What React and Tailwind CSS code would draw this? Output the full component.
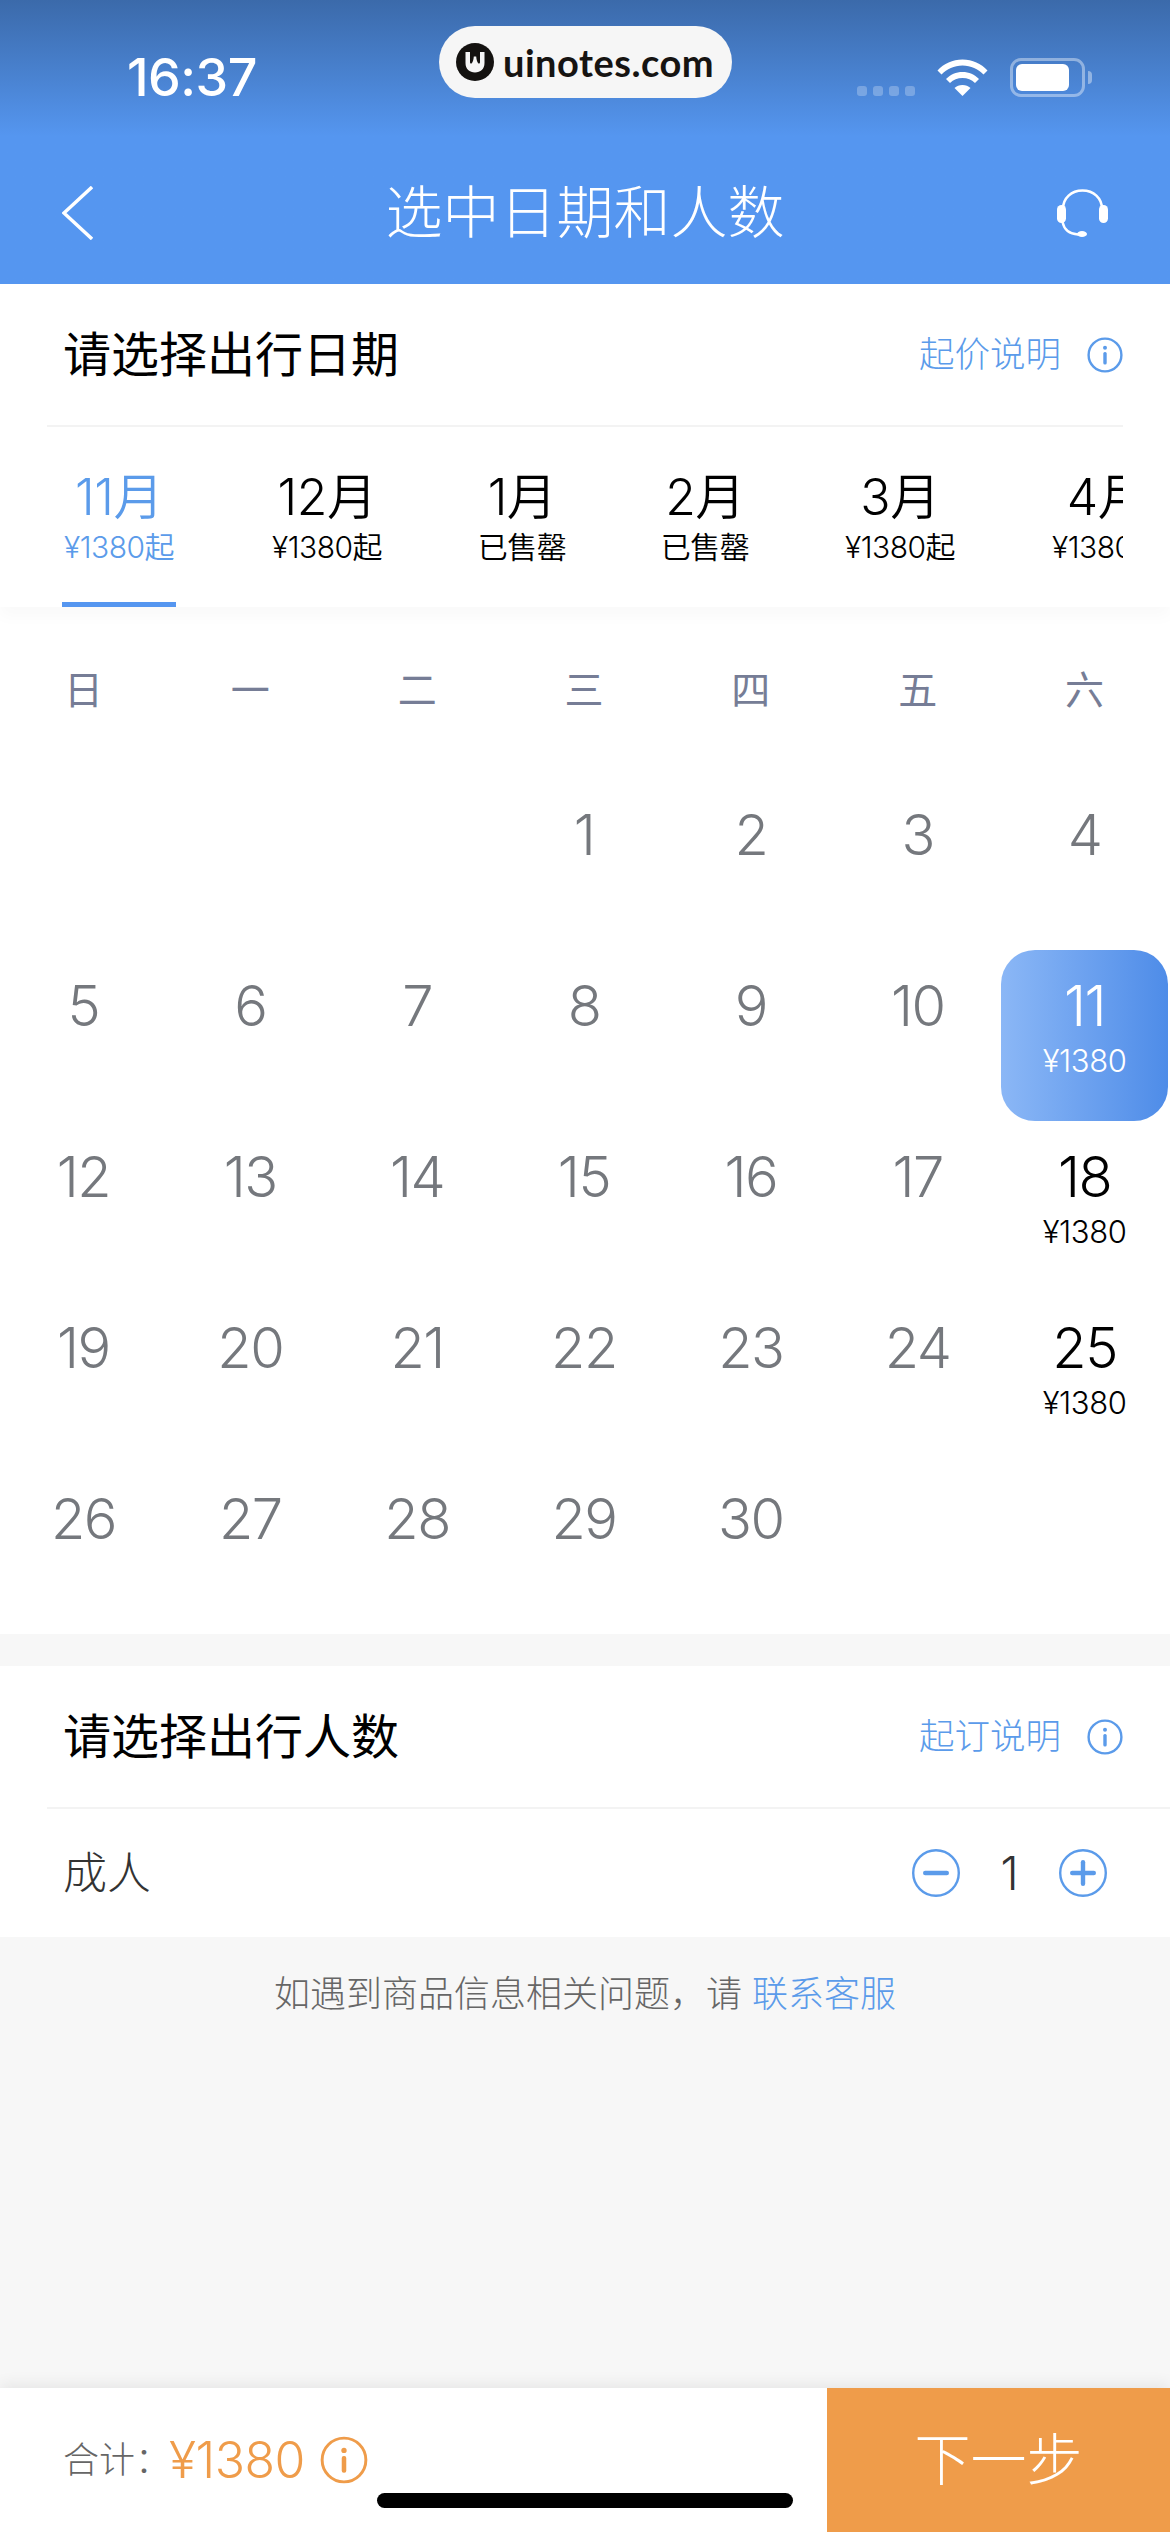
const FONT = "font-['Inter','Noto_Sans_CJK_SC',sans-serif]";

function InfoIcon({ className, color = "#5b9bea", sw = 2.4 }) {
  return (
    <svg viewBox="0 0 36 36" className={className} fill="none">
      <circle cx="18" cy="18" r="16.4" stroke={color} strokeWidth={sw} />
      <circle cx="18" cy="10.8" r="2" fill={color} />
      <rect x="16.3" y="15" width="3.4" height="12.5" rx="1.5" fill={color} />
    </svg>
  );
}

function Wifi() {
  return (
    <svg viewBox="0 0 51 37" className="w-[51px] h-[37px]" fill="#fff">
      <path d="M0.5 11.5C7 4.5 15.5 0.5 25.5 0.5S44 4.5 50.5 11.5L46.5 15.5C41 10 34 6.5 25.5 6.5S10 10 4.5 15.5Z" />
      <path d="M9 20C13.5 15.5 19 13 25.5 13S37.5 15.5 42 20L38 24C34.5 20.8 30.5 19 25.5 19S16.5 20.8 13 24Z" />
      <path d="M17.5 29C19.7 27 22.3 26 25.5 26S31.3 27 33.5 29L25.5 37Z" />
    </svg>
  );
}

function Headset() {
  return (
    <svg viewBox="0 0 51 48" className="w-[51px] h-[48px]" fill="none">
      <path d="M6 20C6 9 14.5 1.5 25.5 1.5S45 9 45 20" stroke="#fff" strokeWidth="2.6" />
      <rect x="0" y="16" width="9" height="18" rx="4.5" fill="#fff" />
      <rect x="42" y="16" width="9" height="18" rx="4.5" fill="#fff" />
      <path d="M5.5 33C7 40 12 45 21 45.5" stroke="#fff" strokeWidth="2.4" />
      <ellipse cx="25" cy="45" rx="5" ry="3" fill="#fff" />
    </svg>
  );
}

function Logo() {
  return (
    <svg viewBox="0 0 38 38" className="w-[38px] h-[38px] shrink-0">
      <circle cx="19" cy="19" r="19" fill="#141210" />
      <path d="M9.5 9H14V19C14 20.5 15 21 15.8 20.2C17 19 17.5 16.5 17.8 13.5H20.2C20.5 16.5 21 19 22.2 20.2C23 21 24 20.5 24 19V9H28.5V20C28.5 26 24.5 29.5 19 29.5S9.5 26 9.5 20Z" fill="#f6f6f6" />
    </svg>
  );
}

function SectionHeader({ title, link, full }) {
  return (
    <div className={`h-[143px] ml-[47px] pl-[16px] flex items-center justify-between border-b-2 border-[#f3f3f3] ${full ? "pr-[47px]" : "mr-[47px]"}`}>
      <span className="text-[48px] leading-[60px] text-black">{title}</span>
      <div className="flex items-center gap-[26px]">
        <span className="text-[35.5px] leading-[44px] text-[#5b9bea] font-light">{link}</span>
        <InfoIcon className="w-[36px] h-[36px]" />
      </div>
    </div>
  );
}

const tabs = [
  ["11月", "¥1380起", true, 114],
  ["12月", "¥1380起", false, 112],
  ["1月", "已售罄", false, 88],
  ["2月", "已售罄", false, 88],
  ["3月", "¥1380起", false, 112],
  ["4月", "¥1380起", false, 112],
];

const weekdays = ["日", "一", "二", "三", "四", "五", "六"];

const days = [
  null, null, null, 1, 2, 3, 4,
  5, 6, 7, 8, 9, 10, 11,
  12, 13, 14, 15, 16, 17, 18,
  19, 20, 21, 22, 23, 24, 25,
  26, 27, 28, 29, 30, null, null,
];

function DayCell({ d }) {
  if (d === null) return <div className="h-[171px]" />;
  const selected = d === 11;
  const priced = d === 11 || d === 18 || d === 25;
  return (
    <div className={`h-[171px] flex flex-col items-center pt-[28px] ${selected ? "rounded-[34px] bg-gradient-to-r from-[#8bb7f6] to-[#4e8ce8] text-white" : priced ? "text-black" : "text-[#75787d]"}`}>
      <span className="text-[56px] leading-[56px] font-[350] tracking-[-1.5px]">{d}</span>
      {priced && <span className="mt-[11px] text-[31px] leading-[32px] font-light tracking-[-0.4px]">¥1380</span>}
    </div>
  );
}

export default function App() {
  return (
    <div className={`${FONT} relative w-[1170px] h-[2532px] bg-[#f7f7f7] flex flex-col overflow-hidden`}>
      <header className="h-[284px] shrink-0 bg-gradient-to-b from-[#3b6aaa] via-[#5596f0] via-[48%] to-[#5596f0]">
        <div className="relative h-[142px] pt-[52px] pl-[127px] pr-[85px] flex justify-between items-start">
          <span className="text-[52px] leading-[52px] font-medium text-white tracking-[-0.5px]">16:37</span>
          <div className="flex items-start mt-[6px]">
            <div className="flex gap-[6px] mt-[28px] mr-[22px]">
              {[0, 1, 2, 3].map((i) => (
                <div key={i} className="w-[10px] h-[10px] rounded-[3px] bg-white/25" />
              ))}
            </div>
            <div className="mt-[1px] mr-[22px]"><Wifi /></div>
            <div className="relative w-[75px] h-[39px] rounded-[11px] border-[3px] border-white/40 p-[3px]">
              <div className="w-[53px] h-[27px] rounded-[6px] bg-white" />
              <div className="absolute -right-[10px] top-[10px] w-[4px] h-[13px] rounded-r-[4px] bg-white/40" />
            </div>
          </div>
          <div className="absolute left-[439px] top-[26px] w-[293px] h-[72px] rounded-[36px] bg-[#f6f6f6] flex items-center pl-[17px] gap-[9px]">
            <Logo />
            <span className="font-['Lato',sans-serif] text-[38px] leading-[44px] font-bold text-[#161412] tracking-[0.5px]">uinotes.com</span>
          </div>
        </div>
        <div className="h-[142px] pl-[62px] pr-[62px] grid grid-cols-[1fr_auto_1fr] items-center">
          <svg viewBox="0 0 31 54" className="w-[31px] h-[54px]" fill="none">
            <path d="M30 1L2 27L30 53" stroke="#fff" strokeWidth="3.4" />
          </svg>
          <span className="text-[57px] leading-[70px] text-white font-light">选中日期和人数</span>
          <div className="flex justify-end"><Headset /></div>
        </div>
      </header>

      <section className="bg-white shrink-0">
        <SectionHeader title="请选择出行日期" link="起价说明" />
        <div className="relative z-10 h-[180px] bg-white shadow-[0_10px_14px_rgba(0,0,0,0.025)]">
          <div className="h-[180px] ml-[47px] mr-[47px] pl-[15px] flex gap-[95px] overflow-hidden">
            {tabs.map(([m, s, active, w]) => (
              <div key={m} style={{ width: w }} className={`shrink-0 h-[180px] pt-[42px] flex flex-col items-center border-b-[5px] ${active ? "border-[#5596f0] text-[#5b9bea]" : "border-transparent text-black"}`}>
                <span className="text-[50px] leading-[56px] font-[350] tracking-[-0.5px]">{m}</span>
                <span className="mt-[3px] text-[30px] leading-[38px] font-[350] tracking-[-0.5px] whitespace-nowrap">{s}</span>
              </div>
            ))}
          </div>
        </div>
        <div className="w-[1168px] grid grid-cols-7 h-[172px] pt-[58px]">
          {weekdays.map((w) => (
            <div key={w} className="text-center text-[39px] leading-[50px] font-normal text-[#767d96]">{w}</div>
          ))}
        </div>
        <div className="w-[1168px] grid grid-cols-7">
          {days.map((d, i) => (
            <DayCell key={i} d={d} />
          ))}
        </div>
      </section>

      <section className="mt-[32px] bg-white shrink-0">
        <SectionHeader title="请选择出行人数" link="起订说明" full />
        <div className="h-[128px] pl-[63px] pr-[63px] flex items-center justify-between">
          <span className="text-[44px] leading-[56px] font-light text-[#333]">成人</span>
          <div className="flex items-center">
            <svg viewBox="0 0 48 48" className="w-[48px] h-[48px]" fill="none">
              <circle cx="24" cy="24" r="22.8" stroke="#5b9bea" strokeWidth="2.4" />
              <rect x="11" y="21.8" width="26" height="4.4" rx="2.2" fill="#5b9bea" />
            </svg>
            <span className="w-[99px] text-center text-[46px] leading-[56px] font-light text-[#333]">1</span>
            <svg viewBox="0 0 48 48" className="w-[48px] h-[48px]" fill="none">
              <circle cx="24" cy="24" r="22.8" stroke="#5b9bea" strokeWidth="2.4" />
              <rect x="11" y="21.8" width="26" height="4.4" rx="2.2" fill="#5b9bea" />
              <rect x="21.8" y="11" width="4.4" height="26" rx="2.2" fill="#5b9bea" />
            </svg>
          </div>
        </div>
      </section>

      <p className="pt-[35px] text-center text-[36px] leading-[44px] font-light text-[#666]">
        如遇到商品信息相关问题，请 <span className="text-[#5b9bea]">联系客服</span>
      </p>

      <footer className="mt-auto h-[144px] shrink-0 bg-white flex justify-between shadow-[0_-4px_14px_rgba(0,0,0,0.07)]">
        <div className="pl-[63px] flex items-center">
          <span className="text-[36px] leading-[44px] font-light text-[#666]">合计：</span>
          <span className="-ml-[2px] text-[50px] leading-[56px] font-light text-[#ef9c4a] tracking-[-0.5px]">¥1380</span>
          <InfoIcon className="ml-[15px] w-[48px] h-[48px]" color="#ef9c4a" sw={2.2} />
        </div>
        <div className="w-[343px] bg-[#ef9c4a] flex items-center justify-center text-[56px] leading-[70px] font-light text-white">下一步</div>
      </footer>
      <div className="absolute left-[377px] top-[2493px] w-[416px] h-[15px] rounded-full bg-black" />
    </div>
  );
}
